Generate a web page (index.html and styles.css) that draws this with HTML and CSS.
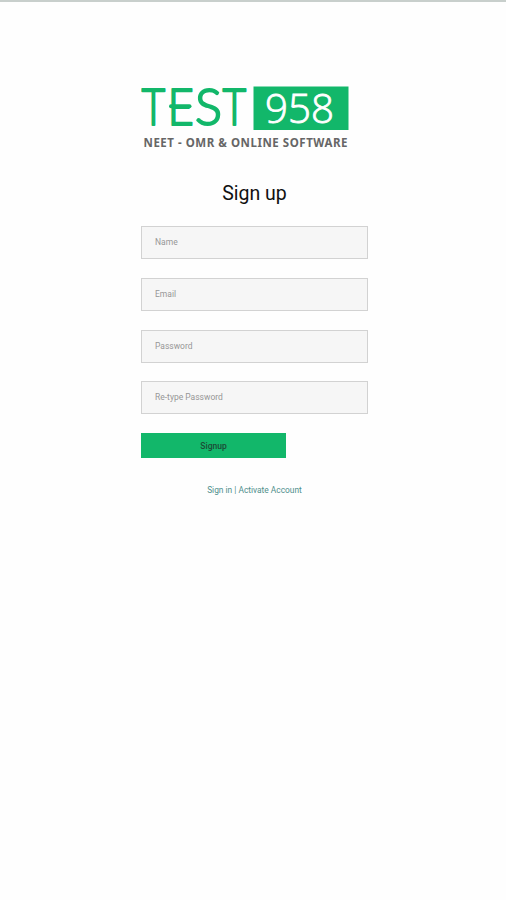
FILE: index.html
```html
<!DOCTYPE html>
<html lang="en">
<head>
  <meta charset="UTF-8" />
  <meta name="viewport" content="width=device-width, initial-scale=1.0" />
  <title>Sign up</title>
  <link rel="stylesheet" href="styles.css">
</head>
<body>
  <div class="signup">
    <svg class="logo" width="210" height="86" viewBox="0 -20 210 86" role="img">
      <g class="logo-test">
        <text transform="translate(.6 40) scale(.81 1)">T</text>
        <text transform="translate(26.5 40) scale(.9 1)">E</text>
        <text transform="translate(54 40)">S</text>
        <text transform="translate(81.6 40) scale(.81 1)">T</text>
      </g>
      <path class="logo-bar" d="M30 21.2h18.5" />
      <rect x="112.5" y="1.5" width="95" height="43.5" fill="#12b76a" />
      <text class="logo-num" x="124" y="38.3" textLength="69" lengthAdjust="spacingAndGlyphs">958</text>
      <text class="logo-tag" x="2.5" y="62" textLength="204" lengthAdjust="spacing">NEET - OMR &amp; ONLINE SOFTWARE</text>
    </svg>
    <h1>Sign up</h1>
    <form>
      <input type="text" placeholder="Name">
      <input type="email" placeholder="Email">
      <input type="password" placeholder="Password">
      <input type="password" placeholder="Re-type Password">
      <button type="button">Signup</button>
    </form>
    <div class="links"><a href="#">Sign in</a> | <a href="#">Activate Account</a></div>
  </div>
</body>
</html>
```

FILE: styles.css
```css
* {
  box-sizing: border-box;
}
body {
  margin: 0;
  min-height: 100vh;
  background: #fefefe;
  border-top: 2px solid #c8cfcc;
  font-family: Roboto, sans-serif;
}
.signup {
  width: 227px;
  margin-left: 141px;
  padding-top: 63px;
}
.logo {
  display: block;
}
.logo-test {
  font-family: Lato, sans-serif;
  font-size: 50.5px;
  font-weight: 300;
  fill: #12b76a;
  stroke: #12b76a;
  stroke-width: 2;
  stroke-linejoin: round;
}
.logo-bar {
  stroke: #12b76a;
  stroke-width: 4;
  stroke-linecap: round;
}
.logo-num {
  font-family: "Open Sans", sans-serif;
  font-size: 40px;
  font-weight: 300;
  fill: #fff;
  stroke: #fff;
  stroke-width: 0.8;
}
.logo-tag {
  font-family: "Noto Sans", sans-serif;
  font-size: 11.5px;
  font-weight: bold;
  fill: #666;
}
h1 {
  margin: 31px 0 20px;
  font-size: 19.5px;
  line-height: 24px;
  font-weight: normal;
  text-align: center;
  color: #111;
}
form {
  display: flex;
  flex-direction: column;
  align-items: flex-start;
  gap: 18.8px;
}
input {
  width: 100%;
  height: 33px;
  padding: 0 13px 1px;
  border: 1px solid #d2d2d2;
  border-radius: 0;
  background: #f6f6f6;
  font-family: inherit;
  font-size: 8.5px;
}
input::placeholder {
  color: #979797;
}
button {
  width: 145px;
  height: 25px;
  padding: 0;
  border: 0;
  background: #12b76a;
  color: #1d4a35;
  font-family: inherit;
  font-size: 8.5px;
  font-weight: 500;
}
.links {
  margin-top: 26px;
  font-size: 8.4px;
  line-height: 12px;
  text-align: center;
  color: #4f8f8c;
}
.links a {
  color: inherit;
  text-decoration: none;
}
```
